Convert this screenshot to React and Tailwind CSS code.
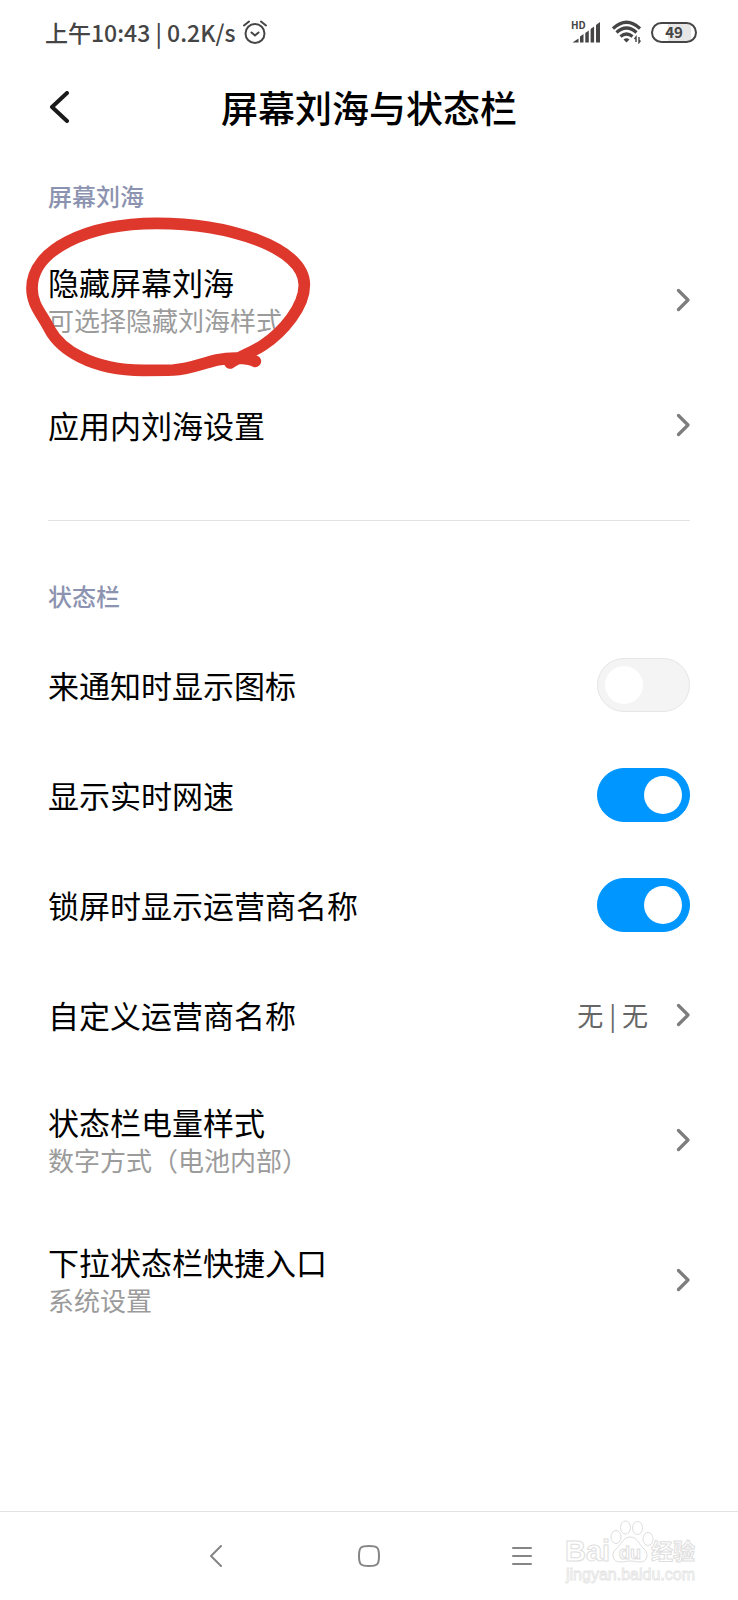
import React, { useState } from 'react';

const StatusBar = () => (
  <div className="flex h-16 items-center justify-between pl-[45px] pr-[41px] text-[#454545]">
    <div className="flex items-center gap-2 text-[23px] leading-8 font-medium">
      <span>上午10:43 | 0.2K/s</span>
      <svg viewBox="0 0 24 24" className="size-6" fill="none" stroke="currentColor" strokeWidth="2" strokeLinecap="round">
        <circle cx="12" cy="13.5" r="9.5" />
        <path d="M1 5.5 L6 1.5 M18 1.5 L23 5.5 M8.5 12.5 L12 15.5 L15.5 12.5" />
      </svg>
    </div>
    <div className="flex items-center gap-[10px]">
      <svg viewBox="0 -6 31 32" className="h-8 w-[31px]" fill="currentColor">
        <text x="0" y="7" fontSize="10" fontWeight="700">HD</text>
        <path d="M1.500 20.500 L7.500 16.500 V20.500 Z M9 14.500 L12.500 12 V20.500 H9 Z M14.300 11 L17.800 8.500 V20.500 H14.300 Z M19.600 7 L23.100 4.500 V20.500 H19.600 Z M25 3 L29 0 V20.500 H25 Z" />
      </svg>
      <svg viewBox="0 0 29 24" className="h-6 w-[29px]" fill="none" stroke="currentColor" strokeWidth="3.200">
        <path d="M1 8.500 Q14.500 -4 28 8.500" />
        <path d="M4.500 12.500 Q14.500 3.500 24.500 12.500" />
        <path d="M8.500 16.500 Q14.500 11.500 20.500 16.500" />
        <path d="M11.500 19.500 Q14.500 17 17.500 19.500 L14.500 22.500 Z" fill="currentColor" stroke="none" />
        <path d="M24 22 V17 L22.500 19 M27 17 V22.500 L28.500 20.500" strokeWidth="1.400" />
      </svg>
      <div className="flex h-[21px] w-[46px] items-center justify-center rounded-full border-2 border-current bg-[linear-gradient(90deg,#fff_35%,#e6e6e6_35%,#e6e6e6_90%,#fff_90%)] text-[15px] leading-4 font-bold">
        49
      </div>
    </div>
  </div>
);

const Chevron = () => (
  <svg viewBox="0 0 14 24" className="h-6 w-[14px] shrink-0" fill="none" stroke="#7d7d7d" strokeWidth="3.200" strokeLinecap="round" strokeLinejoin="round">
    <path d="M2.500 2.500 L12 12 L2.500 21.500" />
  </svg>
);

const LinkRow = ({ title, subtitle, value }) => (
  <button
    type="button"
    className={`flex w-full items-center justify-between text-left ${subtitle ? 'h-[140px]' : 'h-[110px]'}`}
  >
    <span className="flex flex-col">
      <span className="text-[31px] leading-10 text-black">{title}</span>
      {subtitle && <span className="text-[26px] leading-9 text-[#9b9b9b]">{subtitle}</span>}
    </span>
    <span className="flex items-center gap-7">
      {value && <span className="text-[26px] leading-9 text-[#666]">{value}</span>}
      <Chevron />
    </span>
  </button>
);

const SwitchRow = ({ title, defaultOn }) => {
  const [on, setOn] = useState(defaultOn);

  return (
    <label className="flex h-[110px] items-center justify-between">
      <span className="text-[31px] leading-10 text-black">{title}</span>
      <input
        type="checkbox"
        checked={on}
        onChange={(e) => setOn(e.target.checked)}
        className="flex h-[54px] w-[93px] shrink-0 appearance-none items-center rounded-full border border-[#e6e6e6] bg-[#f4f4f4] px-[7px] before:size-[38px] before:rounded-full before:bg-white before:content-[''] checked:justify-end checked:border-[#0096ff] checked:bg-[#0096ff]"
      />
    </label>
  );
};

const SectionTitle = ({ children }) => (
  <h2 className="flex h-[68px] items-center text-2xl font-medium text-[#8c93b0]">{children}</h2>
);

// hand-drawn marker ring round the first setting
const MarkerRing = () => (
  <svg
    viewBox="72 165 870 495"
    className="pointer-events-none absolute -top-[15px] -left-6 h-[165px] w-[290px]"
    fill="none"
    stroke="#de382c"
    strokeWidth="35"
    strokeLinecap="round"
    strokeLinejoin="round"
  >
    <path d="M766 604 C740 592 690 592 650 600 C600 612 570 627 520 630 C490 631 460 631 430 631 C270 631 180 565 150 510 C125 460 96 435 96 385 C96 270 260 190 470 190 C680 190 913 260 913 375 C913 440 850 515 790 555 C760 575 720 590 690 609" />
  </svg>
);

const Watermark = () => (
  <svg
    viewBox="0 0 140 70"
    className="pointer-events-none absolute top-2 right-[35px] h-[70px] w-[140px] font-['Liberation_Sans','Noto_Sans_CJK_SC',sans-serif]"
    fill="#fff"
    stroke="#dedede"
    strokeWidth="1"
  >
    <text x="2" y="41" fontSize="29" fontWeight="700">Bai</text>
    <ellipse cx="53" cy="17" rx="5" ry="6.500" />
    <ellipse cx="62.500" cy="7.500" rx="5" ry="6.500" />
    <ellipse cx="74.500" cy="8" rx="5" ry="6.500" />
    <ellipse cx="85" cy="19" rx="5" ry="6.500" />
    <path d="M67 17 C60 17 58 25 53 29 C48 33 49 42 57 42 C62 42 64 41 67 41 C71 41 73 42 77 42 C85 42 86 33 81 29 C76 25 75 17 67 17 Z" />
    <text x="56" y="39" fontSize="18" fontWeight="700">du</text>
    <text x="88" y="39" fontSize="22" fontWeight="700">经验</text>
    <text x="3" y="60" fontSize="16" stroke="#e4e4e4" strokeWidth="0.800">jingyan.baidu.com</text>
  </svg>
);

const NavBar = () => (
  <nav className="relative h-[89px] border-t border-[#e2e2e2] text-[#858585]">
    <div className="flex h-[87px] items-center justify-center gap-[121px]">
      <button type="button" aria-label="返回" className="flex w-8 justify-center">
        <svg viewBox="0 0 12 22" className="h-[22px] w-3" fill="none" stroke="currentColor" strokeWidth="2" strokeLinecap="round" strokeLinejoin="round">
          <path d="M11 1 L1 11 L11 21" />
        </svg>
      </button>
      <button type="button" aria-label="主页" className="flex w-8 justify-center">
        <svg viewBox="0 0 22 22" className="size-[22px]" fill="none" stroke="currentColor" strokeWidth="2">
          <path d="M11 1 C19 1 21 2 21 11 C21 20 19 21 11 21 C3 21 1 20 1 11 C1 2 3 1 11 1 Z" />
        </svg>
      </button>
      <button type="button" aria-label="菜单" className="flex w-8 justify-center">
        <svg viewBox="0 0 20 20" className="size-5" stroke="currentColor" strokeWidth="2" strokeLinecap="round">
          <path d="M1 2 H19 M1 10 H19 M1 18 H19" />
        </svg>
      </button>
    </div>
    <Watermark />
  </nav>
);

const App = () => {
  return (
    <div className="flex min-h-screen flex-col bg-white font-['Noto_Sans_CJK_SC',sans-serif]">
      <StatusBar />

      <header className="grid h-[86px] grid-cols-[24px_1fr_24px] items-center px-12">
        <button type="button" aria-label="返回">
          <svg viewBox="0 0 24 32" className="h-8 w-6" fill="none" stroke="#1a1a1a" strokeWidth="4" strokeLinecap="round" strokeLinejoin="round">
            <path d="M19 2 L4 16 L19 30" />
          </svg>
        </button>
        <h1 className="text-center text-[37px] leading-[48px] font-medium text-black">屏幕刘海与状态栏</h1>
      </header>

      <main className="flex-1 px-12 pt-3">
        <section>
          <SectionTitle>屏幕刘海</SectionTitle>
          <div className="relative">
            <LinkRow title="隐藏屏幕刘海" subtitle="可选择隐藏刘海样式" />
            <MarkerRing />
          </div>
          <LinkRow title="应用内刘海设置" />
        </section>

        <hr className="mt-10 mb-[41px] border-[#e2e2e2]" />

        <section>
          <SectionTitle>状态栏</SectionTitle>
          <SwitchRow title="来通知时显示图标" defaultOn={false} />
          <SwitchRow title="显示实时网速" defaultOn={true} />
          <SwitchRow title="锁屏时显示运营商名称" defaultOn={true} />
          <LinkRow title="自定义运营商名称" value="无 | 无" />
          <LinkRow title="状态栏电量样式" subtitle="数字方式（电池内部）" />
          <LinkRow title="下拉状态栏快捷入口" subtitle="系统设置" />
        </section>
      </main>

      <NavBar />
    </div>
  );
};

export default App;
